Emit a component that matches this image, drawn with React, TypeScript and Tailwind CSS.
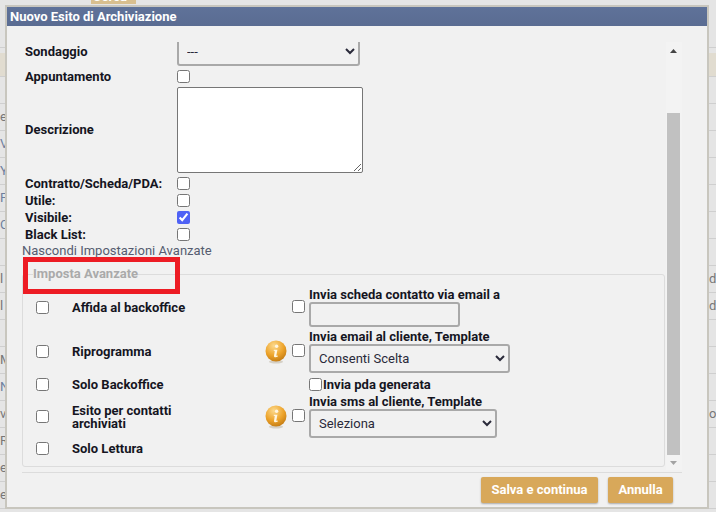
const bgRows = [
  { left: "", right: "", tan: true, h: "h-[24px]" },
  { left: "", right: "", h: "h-[27px]" },
  { left: "e", right: "", h: "h-[27px]" },
  { left: "V", right: "", h: "h-[27px]", blue: true },
  { left: "Y", right: "", h: "h-[27px]", blue: true },
  { left: "F", right: "", h: "h-[27px]", blue: true },
  { left: "C", right: "", h: "h-[27px]", blue: true },
  { left: "", right: "", h: "h-[27px]" },
  { left: "l", right: "d", h: "h-[27px]" },
  { left: "l", right: "d", h: "h-[27px]" },
  { left: "", right: "", h: "h-[27px]" },
  { left: "M", right: "", h: "h-[27px]" },
  { left: "N", right: "", h: "h-[27px]", blue: true },
  { left: "v", right: "o", h: "h-[27px]" },
  { left: "R", right: "", h: "h-[27px]" },
  { left: "et", right: "", h: "h-[27px]" },
  { left: "e", right: "", h: "h-[27px]" },
];

function InfoIcon({ id }: { id: string }) {
  return (
    <svg width="22" height="24" viewBox="0 0 22 24">
      <defs>
        <radialGradient id={id} cx="0.4" cy="0.25" r="0.85">
          <stop offset="0" stopColor="#fcd98c" />
          <stop offset="0.55" stopColor="#eda32a" />
          <stop offset="1" stopColor="#b9720f" />
        </radialGradient>
      </defs>
      <ellipse cx="11" cy="21.8" rx="7" ry="1.8" fill="#d5d0c6" />
      <circle cx="11" cy="11" r="10.5" fill={`url(#${id})`} />
      <circle cx="11.6" cy="6.2" r="1.7" fill="#fff6e2" />
      <path d="M8.8 9.8h3.6l-1 5.4c-.1.6.4.7 1.6.3l-.2 1.1c-1.8.9-4 .9-3.8-.9l.8-4.6-1.1-.3z" fill="#fff6e2" />
    </svg>
  );
}

function Check({ checked }: { checked?: boolean }) {
  return (
    <input
      type="checkbox"
      defaultChecked={checked}
      className="m-0 h-[13px] w-[13px] accent-[#4f62f5]"
    />
  );
}

function TopRow({ label, checked }: { label: string; checked?: boolean }) {
  return (
    <div className="flex h-[17px] items-center">
      <div className="w-[152px] text-[13px] font-bold text-[#15151f]">{label}</div>
      <Check checked={checked} />
    </div>
  );
}

function OptionRow({
  label,
  info,
  height,
  children,
}: {
  label: string;
  info?: string;
  height: string;
  children?: React.ReactNode;
}) {
  return (
    <div className={`flex items-center ${height}`}>
      <div className="flex w-[36px]">
        <Check />
      </div>
      <div className="w-[193px]">
        <div className="w-[130px] text-[13px] leading-[13px] font-bold text-[#15151f]">{label}</div>
      </div>
      <div className="w-[27px]">{info && <InfoIcon id={info} />}</div>
      {children}
    </div>
  );
}

function FieldLabel({ children }: { children: React.ReactNode }) {
  return <div className="h-[14px] text-[13px] leading-[14px] font-bold text-[#15151f]">{children}</div>;
}

function NativeSelect({ value, width }: { value: string; width: string }) {
  return (
    <select
      defaultValue={value}
      className={`block h-[29px] rounded-[3px] border-2 border-[#a9a9a9] bg-[#f1f1f1] pl-[4px] text-[13px] text-[#2a2a3a] ${width}`}
    >
      <option>{value}</option>
    </select>
  );
}

export default function App() {
  return (
    <div className="relative h-[512px] w-[716px] overflow-hidden bg-[#e5e5e5] font-['Roboto',sans-serif]">
      {/* pagina dietro al dialog */}
      <div className="ml-[91px] h-[4px] w-[45px] overflow-hidden bg-[#d8bf8f] pl-[2px]">
        <div className="-mt-[10px] text-[13px] leading-[14px] font-bold text-white">Cerca</div>
      </div>
      <div className="mt-[43px] h-[6px] border-t border-[#cfcfcf]" />
      {bgRows.map((r, i) => (
        <div
          key={i}
          className={`flex items-center justify-between border-b border-[#cfcfcf] text-[13px] text-[#777] ${r.h} ${
            r.tan ? "bg-[#e1dcd0]" : ""
          }`}
        >
          <span className={r.blue ? "text-[#6d7f9e]" : ""}>{r.left}</span>
          <span className="w-[7px] text-[#777]">{r.right}</span>
        </div>
      ))}

      {/* dialog */}
      <div className="absolute top-[5px] left-[5px] flex h-[504px] w-[704px] flex-col border-2 border-[#c8c6be] bg-[#f1f1f1]">
        <div className="flex h-[19px] items-center bg-gradient-to-b from-[#5f7299] to-[#5a6c92] pl-[3px] text-[13px] font-bold text-white">
          Nuovo Esito di Archiviazione
        </div>

        <div className="mt-[16px] flex h-[428px] overflow-hidden">
          <div className="ml-[15px] w-[643px]">
            <div className="-mt-[5px] pl-[3px]">
              <div className="flex h-[29px] items-center">
                <div className="w-[152px] text-[13px] font-bold text-[#15151f]">Sondaggio</div>
                <NativeSelect value="---" width="w-[183px]" />
              </div>
              <div className="mt-px flex h-[19px] items-center">
                <div className="w-[152px] text-[13px] font-bold text-[#15151f]">Appuntamento</div>
                <Check />
              </div>
              <div className="mt-px flex h-[86px] items-center">
                <div className="w-[152px] text-[13px] font-bold text-[#15151f]">Descrizione</div>
                <textarea className="h-[86px] w-[186px] rounded-[2px] border border-[#767676] bg-white" />
              </div>
              <div className="mt-[2px]">
                <TopRow label="Contratto/Scheda/PDA:" />
                <TopRow label="Utile:" />
                <TopRow label="Visibile:" checked />
                <TopRow label="Black List:" />
              </div>
            </div>
            <div className="mt-px h-[14px] text-[13px] leading-[14px] text-[#555c70]">Nascondi Impostazioni Avanzate</div>

            <fieldset className="mt-[9px] h-[200px] rounded-[3px] border border-[#dcdcdc] pt-[5px] pl-[13px]">
              <legend className="-ml-[3px] h-[14px] text-[13px] leading-[14px] font-bold text-[#aaaaaa]">
                Imposta Avanzate
              </legend>
              <OptionRow label="Affida al backoffice" height="h-[43px]">
                <div className="w-[17px]">
                  <Check />
                </div>
                <div>
                  <FieldLabel>Invia scheda contatto via email a</FieldLabel>
                  <input className="block h-[25px] w-[151px] rounded-[3px] border-2 border-[#a9a9a9] bg-[#f1f1f1]" />
                </div>
              </OptionRow>
              <div className="mt-px">
                <OptionRow label="Riprogramma" info="info-a" height="h-[43px]">
                  <div className="w-[17px]">
                    <Check />
                  </div>
                  <div>
                    <FieldLabel>Invia email al cliente, Template</FieldLabel>
                    <NativeSelect value="Consenti Scelta" width="w-[201px]" />
                  </div>
                </OptionRow>
              </div>
              <OptionRow label="Solo Backoffice" height="h-[22px]">
                <div className="w-[17px]" />
                <Check />
                <div className="ml-px pt-px text-[13px] font-bold text-[#15151f]">Invia pda generata</div>
              </OptionRow>
              <OptionRow label="Esito per contatti archiviati" info="info-b" height="h-[43px]">
                <div className="w-[17px]">
                  <Check />
                </div>
                <div>
                  <FieldLabel>Invia sms al cliente, Template</FieldLabel>
                  <NativeSelect value="Seleziona" width="w-[188px]" />
                </div>
              </OptionRow>
              <OptionRow label="Solo Lettura" height="h-[20px]" />
            </fieldset>
          </div>

          {/* scrollbar */}
          <div className="relative ml-[1px] w-[16px] bg-[#f3f3f3]">
            <svg className="absolute top-[7px] left-[4px]" width="7" height="4" viewBox="0 0 7 4">
              <polygon points="3.5,0 7,4 0,4" fill="#444" />
            </svg>
            <div className="mx-px mt-[71px] h-[342px] w-[13px] bg-[#c1c1c1]" />
            <svg className="absolute top-[419px] left-[4px]" width="7" height="4" viewBox="0 0 7 4">
              <polygon points="0,0 7,0 3.5,4" fill="#a3a3a3" />
            </svg>
          </div>
        </div>

        <div className="mt-[2px] ml-[15px] w-[660px] border-t border-[#dcdcdc]" />
        <div className="mt-[4px] flex justify-end gap-[10px] pr-[34px]">
          <button className="h-[26px] w-[117px] rounded-[2px] bg-[#d8a85a] text-[13px] font-bold text-white shadow-[0_1px_2px_rgba(0,0,0,0.3)]">
            Salva e continua
          </button>
          <button className="h-[26px] w-[65px] rounded-[2px] bg-[#d8a85a] text-[13px] font-bold text-white shadow-[0_1px_2px_rgba(0,0,0,0.3)]">
            Annulla
          </button>
        </div>
      </div>

      {/* riquadro rosso di annotazione */}
      <div className="absolute top-[257px] left-[23px] h-[37px] w-[157px] border-[5px] border-[#ed1c24]" />
    </div>
  );
}
